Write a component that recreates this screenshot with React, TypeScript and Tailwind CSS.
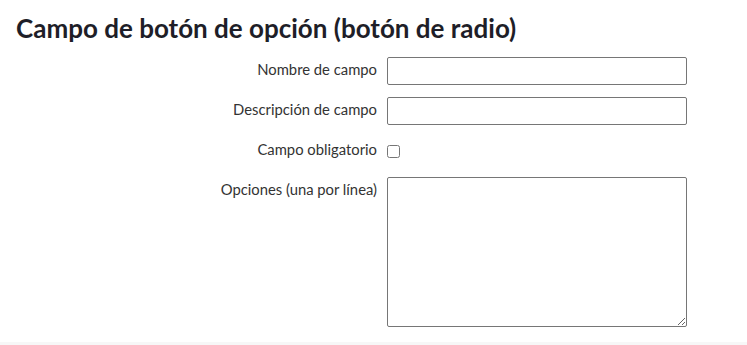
import React from 'react';

// Radio button field editor form
export default function App() {
  const fieldClass =
    'w-[300px] h-[28px] border border-[#767676] rounded-[2px] bg-white px-1 text-[14px] outline-none';

  return (
    <div className="w-[747px] h-[345px] bg-white flex flex-col" style={{ fontFamily: 'Lato, "Noto Sans", sans-serif' }}>
      <div className="flex-1 pl-4 pt-[11px]">
        <h2 className="text-[26px] leading-[34px] font-bold text-[#1e1e28]">
          Campo de botón de opción (botón de radio)
        </h2>

        <form className="mt-[12px] grid grid-cols-[361px_300px] gap-x-[10px] gap-y-[12px] text-[14.8px] text-[#333]">
          <label className="text-right pt-[2px] leading-[20px]">Nombre de campo</label>
          <input type="text" className={fieldClass} />

          <label className="text-right pt-[2px] leading-[20px]">Descripción de campo</label>
          <input type="text" className={fieldClass} />

          <label className="text-right pt-[2px] leading-[20px]">Campo obligatorio</label>
          <div className="h-[28px] flex items-start pt-[8px]">
            <input type="checkbox" className="w-[13px] h-[13px] m-0" />
          </div>

          <label className="text-right pt-[2px] leading-[20px]">Opciones (una por línea)</label>
          <textarea className="w-[300px] h-[150px] border border-[#767676] rounded-[2px] bg-white p-1 text-[14px] outline-none" />
        </form>
      </div>
      <div className="h-[3px] bg-[#f7f7f7]" />
    </div>
  );
}
